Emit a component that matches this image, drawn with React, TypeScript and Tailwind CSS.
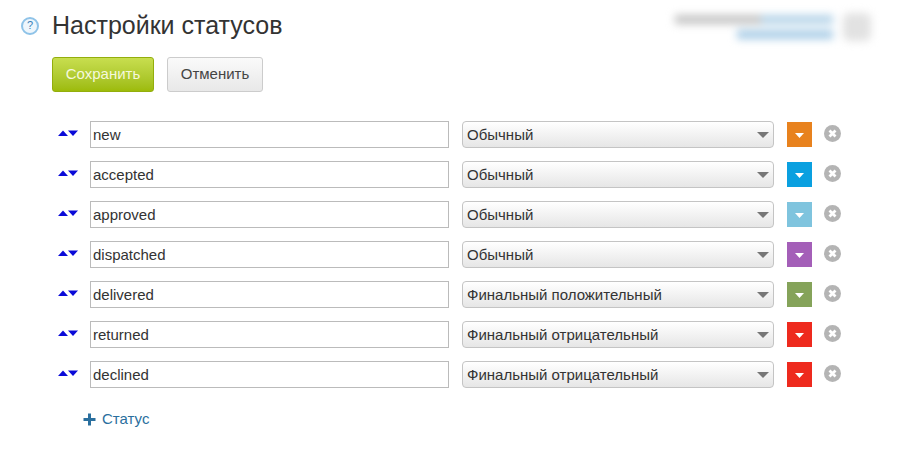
const rows = [
  { name: "new", type: "Обычный", color: "bg-[#e8821e]" },
  { name: "accepted", type: "Обычный", color: "bg-[#0aa0e0]" },
  { name: "approved", type: "Обычный", color: "bg-[#7fc4de]" },
  { name: "dispatched", type: "Обычный", color: "bg-[#a45fb8]" },
  { name: "delivered", type: "Финальный положительный", color: "bg-[#85a35a]" },
  { name: "returned", type: "Финальный отрицательный", color: "bg-[#ee2a1e]" },
  { name: "declined", type: "Финальный отрицательный", color: "bg-[#ee2a1e]" },
];

const StatusRow = ({ name, type, color }: { name: string; type: string; color: string }) => (
  <div className="flex items-center h-[27px] mb-[13px]">
    <svg width="20" height="6" viewBox="0 0 20 6" className="ml-[58px] mr-[12px] -mt-[3px]">
      <path d="M0 6 L5 0.5 L10 6 Z" fill="#0a0ad8" />
      <path d="M10 0.5 L20 0.5 L15 6 Z" fill="#0a0ad8" />
    </svg>
    <div className="w-[359px] h-[27px] border border-[#bbbbbb] bg-white pl-[2px] text-[15px] leading-[26px] text-[#333333]">
      {name}
    </div>
    <div className="ml-[13px] w-[312px] h-[27px] flex items-center justify-between rounded-[4px] border border-[#c4c4c4] bg-gradient-to-b from-white to-[#e6e6e6] pl-[4px] pr-[3px] text-[15px] text-[#333333]">
      <span className="mt-[1px]">{type}</span>
      <svg width="12" height="6" viewBox="0 0 12 6" className="mr-[1px]">
        <path d="M0 0 H12 L6 6 Z" fill="#777777" />
      </svg>
    </div>
    <div className={`ml-[13px] w-[25px] h-[25px] flex items-center justify-center ${color}`}>
      <svg width="9" height="5" viewBox="0 0 9 5" className="mt-[2px]">
        <path d="M0 0 H9 L4.5 5 Z" fill="#ffffff" />
      </svg>
    </div>
    <svg width="17" height="17" viewBox="0 0 17 17" className="ml-[12px] -mt-[3px]">
      <circle cx="8.5" cy="8.5" r="8.5" fill="#b4b4b4" />
      <path d="M5.5 5.5 L11.5 11.5 M11.5 5.5 L5.5 11.5" stroke="#ffffff" strokeWidth="2.8" />
    </svg>
  </div>
);

const App = () => {
  return (
    <div className="w-[904px] h-[450px] bg-white overflow-hidden font-['Liberation_Sans',Arial,sans-serif]">
      <div className="flex items-center h-[52px] pl-[21px]">
        <div className="w-[18px] h-[18px] rounded-full border-2 border-[#8fc3e8] bg-[#eef6fc] flex items-center justify-center text-[11px] font-normal text-[#3b7fb8] -mt-[1px]">
          ?
        </div>
        <h1 className="ml-[13px] w-[282px] text-[25px] font-normal text-[#333333]">Настройки статусов</h1>
        <div className="ml-[341px] mt-[2px] flex items-center blur-[4px]">
          <div className="flex flex-col items-end gap-[6px]">
            <div className="flex">
              <div className="w-[86px] h-[9px] bg-[#c4c4c4]" />
              <div className="w-[72px] h-[9px] bg-[#b4d3e8]" />
            </div>
            <div className="w-[96px] h-[9px] bg-[#a8cce6]" />
          </div>
          <div className="ml-[10px] w-[28px] h-[28px] rounded-[6px] bg-[#e2e2e2]" />
        </div>
      </div>
      <div className="flex pl-[52px] pt-[5px] gap-[13px]">
        <button className="w-[102px] h-[35px] rounded-[3px] border border-[#93ae0c] bg-gradient-to-b from-[#c8de4e] to-[#9dbb08] text-[15px] text-[#f5f8dc]">
          Сохранить
        </button>
        <button className="w-[96px] h-[35px] rounded-[3px] border border-[#cccccc] bg-gradient-to-b from-[#fafafa] to-[#e8e8e8] text-[15px] text-[#444444]">
          Отменить
        </button>
      </div>
      <div className="pt-[29px]">
        {rows.map((r) => (
          <StatusRow key={r.name} name={r.name} type={r.type} color={r.color} />
        ))}
      </div>
      <div className="flex items-center pl-[83px] pt-[7px] text-[15px] text-[#2a6f9e]">
        <svg width="13" height="13" viewBox="0 0 13 13">
          <path d="M6.5 0.5 V12.5 M0.5 6.5 H12.5" stroke="#2a6f9e" strokeWidth="3" />
        </svg>
        <span className="ml-[6px]">Статус</span>
      </div>
    </div>
  );
};

export default App;
